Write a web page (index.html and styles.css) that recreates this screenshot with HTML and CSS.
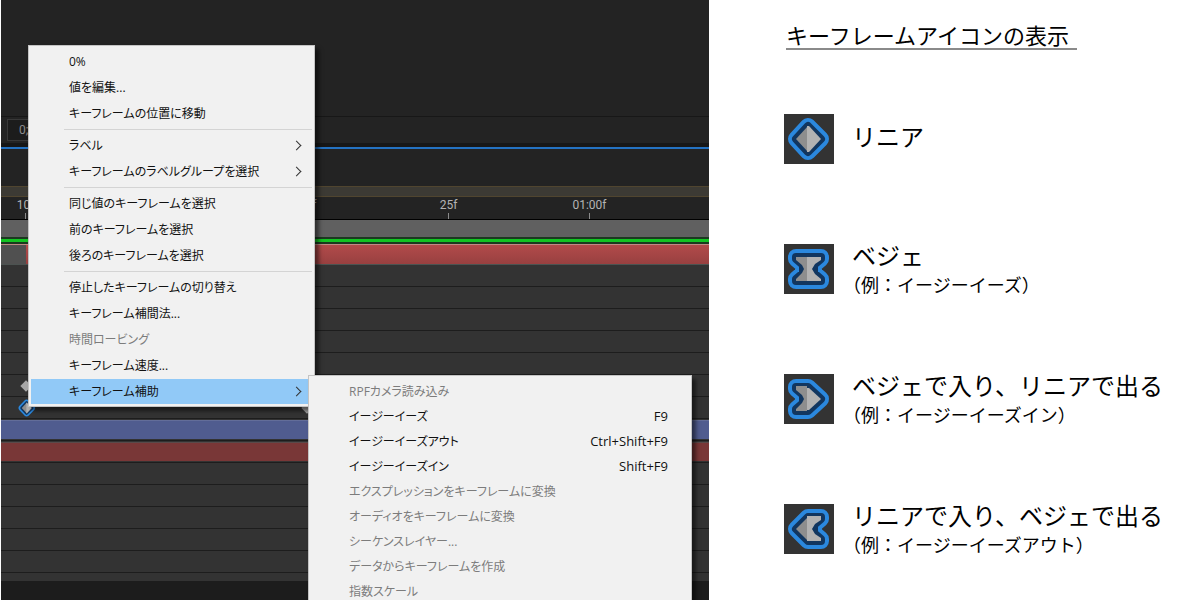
FILE: index.html
```html
<!DOCTYPE html>
<html lang="ja">
<head>
    <meta charset="UTF-8">
    <meta name="viewport" content="width=device-width, initial-scale=1.0">
    <title>キーフレームアイコンの表示</title>
    <link rel="stylesheet" href="styles.css">
</head>
<body>
    <svg class="defs" aria-hidden="true">
        <symbol id="linear" viewBox="0 0 50 50">
            <path class="ring" d="M24 12L37 25L24 38L12 25Z"/>
            <path class="gap" d="M24 12L37 25L24 38L12 25Z"/>
            <path class="dark" d="M24 12V38L12 25Z"/>
            <path class="light" d="M23 12L25 12L37 25L25 38H23Z"/>
        </symbol>
        <symbol id="bezier" viewBox="0 0 50 50">
            <path class="ring" d="M12 13H37V15L30 21V29L37 35V37H12V35L19 29V21L12 15Z"/>
            <path class="gap" d="M12 13H37V15L30 21V29L37 35V37H12V35L19 29V21L12 15Z"/>
            <path class="dark" d="M12 13H23V37H12V35L18 29L20 25L18 21L12 16Z"/>
            <path class="light" d="M23 13H37V16L31 20L28 25L31 30L37 35V37H23Z"/>
        </symbol>
        <symbol id="bezier-linear" viewBox="0 0 50 50">
            <path class="ring" d="M12 13H24L37 25L24 37H12V35L19 29V21L12 15Z"/>
            <path class="gap" d="M12 13H24L37 25L24 37H12V35L19 29V21L12 15Z"/>
            <path class="dark" d="M12 12H23V37H12V35L18 29L20 25L18 21L12 16Z"/>
            <path class="light" d="M23 14H25L37 25L25 36H23Z"/>
        </symbol>
        <symbol id="linear-bezier" viewBox="0 0 50 50">
            <path class="ring" d="M24 13H37V15L30 21V29L37 35V37H24L12 25Z"/>
            <path class="gap" d="M24 13H37V15L30 21V29L37 35V37H24L12 25Z"/>
            <path class="dark" d="M23 14V36L12 25Z"/>
            <path class="light" d="M23 12H37V16L31 20L28 25L31 30L37 34V37H23Z"/>
        </symbol>
    </svg>

    <section class="timeline">
        <div class="panel-top"></div>
        <div class="toolbar"><span class="field">0;</span></div>
        <div class="active-line"></div>
        <div class="navigator"></div>
        <div class="work-range"></div>
        <div class="ruler">
            <span class="tick">10f</span>
            <span class="tick"></span>
            <span class="tick">20f</span>
            <span class="tick">25f</span>
            <span class="tick">01:00f</span>
        </div>
        <div class="work-area"></div>
        <div class="cache"></div>
        <div class="layer selected"></div>
        <div class="row"></div>
        <div class="row"></div>
        <div class="row"></div>
        <div class="row"></div>
        <div class="row"></div>
        <div class="row"><i class="key"></i></div>
        <div class="row">
            <svg class="key-selected"><use href="#linear"/></svg>
            <i class="key end"></i>
        </div>
        <div class="row"><div class="bar blue"></div></div>
        <div class="row"><div class="bar red"></div></div>
        <div class="row"></div>
        <div class="row"></div>
        <div class="row"></div>
        <div class="row"></div>
        <div class="row"></div>
        <div class="row last"></div>

        <div class="menu main-menu">
            <button>0%</button>
            <button>値を編集...</button>
            <button>キーフレームの位置に移動</button>
            <hr>
            <button class="more">ラベル</button>
            <button class="more">キーフレームのラベルグループを選択</button>
            <hr>
            <button>同じ値のキーフレームを選択</button>
            <button>前のキーフレームを選択</button>
            <button>後ろのキーフレームを選択</button>
            <hr>
            <button>停止したキーフレームの切り替え</button>
            <button>キーフレーム補間法...</button>
            <button disabled>時間ロービング</button>
            <button>キーフレーム速度...</button>
            <button class="more active">キーフレーム補助</button>
        </div>

        <div class="menu sub-menu">
            <button disabled>RPFカメラ読み込み</button>
            <button>イージーイーズ<span>F9</span></button>
            <button>イージーイーズアウト<span>Ctrl+Shift+F9</span></button>
            <button>イージーイーズイン<span>Shift+F9</span></button>
            <button disabled>エクスプレッションをキーフレームに変換</button>
            <button disabled>オーディオをキーフレームに変換</button>
            <button disabled>シーケンスレイヤー...</button>
            <button disabled>データからキーフレームを作成</button>
            <button disabled>指数スケール</button>
        </div>
    </section>

    <section class="legend">
        <h1>キーフレームアイコンの表示</h1>
        <ul>
            <li>
                <svg class="icon"><use href="#linear"/></svg>
                <h2 class="single">リニア</h2>
            </li>
            <li>
                <svg class="icon"><use href="#bezier"/></svg>
                <div>
                    <h2>ベジェ</h2>
                    <p>（例：イージーイーズ）</p>
                </div>
            </li>
            <li>
                <svg class="icon"><use href="#bezier-linear"/></svg>
                <div>
                    <h2>ベジェで入り、リニアで出る</h2>
                    <p>（例：イージーイーズイン）</p>
                </div>
            </li>
            <li>
                <svg class="icon"><use href="#linear-bezier"/></svg>
                <div>
                    <h2>リニアで入り、ベジェで出る</h2>
                    <p>（例：イージーイーズアウト）</p>
                </div>
            </li>
        </ul>
    </section>
</body>
</html>
```

FILE: styles.css
```css
* {
    box-sizing: border-box;
}

body {
    margin: 0;
    display: flex;
    height: 100vh;
    overflow: hidden;
    background-color: #fff;
    color: #000;
    font-family: "Noto Sans CJK JP", sans-serif;
}

.defs {
    position: absolute;
    width: 0;
    height: 0;
}

/* icon parts */
.ring {
    fill: #2b88de;
    stroke: #2b88de;
    stroke-width: 16;
    stroke-linejoin: round;
}

.gap {
    fill: #12365f;
    stroke: #12365f;
    stroke-width: 8;
    stroke-linejoin: round;
}

.dark {
    fill: #8e8e8e;
}

.light {
    fill: #b2b2b2;
}

/* timeline */
.timeline {
    position: relative;
    width: 59%;
    margin-left: 1px;
    overflow: hidden;
    background-color: #1c1c1c;
}

.panel-top {
    height: 117px;
    background-color: #232323;
    border-bottom: 1px solid #171717;
}

.toolbar {
    height: 26px;
    padding: 2px 6px;
    background-color: #232323;
}

.field {
    display: block;
    width: 80px;
    height: 22px;
    padding-left: 11px;
    border: 1px solid #383838;
    background-color: #1c1c1c;
    color: #8c8c8c;
    font: 12px/20px Roboto, sans-serif;
}

.active-line {
    height: 6px;
    background-color: #171717;
    border-bottom: 2px solid #2472c2;
}

.navigator {
    height: 37px;
    background-color: #232323;
}

.work-range {
    height: 11px;
    background-color: #3c3a34;
    border: solid #50452f;
    border-width: 1px 0;
}

.ruler {
    display: flex;
    height: 23px;
    margin-left: -46px;
    background-color: #232323;
    border-bottom: 1px solid #000;
}

.tick {
    display: flex;
    flex-direction: column;
    align-items: center;
    justify-content: flex-end;
    flex: none;
    width: 141px;
    color: #b4b4b4;
    font: 12px/16px Roboto, sans-serif;
}

.tick::after {
    content: "";
    width: 1px;
    height: 6px;
    background-color: #8a8a8a;
}

.work-area {
    height: 17px;
    background-color: #606060;
}

.cache {
    height: 7px;
    background-color: #12c422;
    border: solid #1b3a1f;
    border-width: 2px 0;
}

.layer {
    height: 21px;
    border: solid #4c5351;
    border-width: 1px 0;
    background-color: #505050;
}

.selected {
    background-image: linear-gradient(#b24b4b, #984040);
    background-position: 25px 0;
    background-repeat: no-repeat;
    border-top-color: #c08a86;
}

.row {
    display: flex;
    align-items: center;
    height: 22px;
    background-color: #333;
    border-bottom: 1px solid #1d1d1d;
}

.last {
    height: 8px;
    border: 0;
}

.key {
    width: 8px;
    height: 8px;
    margin-left: 21px;
    background-color: #a8a8a8;
    transform: rotate(45deg);
}

.key-selected {
    width: 20px;
    height: 20px;
    margin-left: 16px;
}

.key.end {
    margin-left: 266px;
}

.bar {
    flex: 1;
    height: 19px;
}

.blue {
    background-color: #505c8f;
    border-top: 1px solid #636d99;
}

.red {
    background-color: #793737;
    border-top: 1px solid #5a4a4a;
}

/* context menus */
.menu {
    position: absolute;
    display: flex;
    flex-direction: column;
    background-color: #f1f1f1;
    border: 1px solid #c4c4c4;
    box-shadow: 4px 4px 4px rgba(0, 0, 0, 0.5);
}

.main-menu {
    top: 45px;
    left: 27px;
    width: 287px;
    padding: 3px 2px 2px;
    gap: 1px;
}

.sub-menu {
    top: 375px;
    left: 307px;
    width: 384px;
    padding: 3px 2px;
}

.menu button {
    display: flex;
    align-items: center;
    height: 25px;
    flex: none;
    padding: 0 21px 0 38px;
    border: 0;
    background: none;
    color: #111;
    font: 12px/25px "Open Sans", "Noto Sans CJK JP", sans-serif;
    font-feature-settings: "palt";
    white-space: nowrap;
}

.menu button:disabled {
    color: #7c7c7c;
}

.menu button.active {
    background-color: #91c9f7;
}

.menu button span {
    margin-left: auto;
    font-size: 13px;
}

.more::after {
    content: "";
    width: 6px;
    height: 6px;
    margin-left: auto;
    margin-right: -9px;
    border: solid #333;
    border-width: 1px 1px 0 0;
    transform: rotate(45deg);
}

.menu hr {
    width: calc(100% - 33px);
    height: 5px;
    margin: 0 0 0 33px;
    border: 0;
    background: linear-gradient(#d4d4d4, #d4d4d4) 0 2px / 100% 1px no-repeat;
}

/* legend */
.legend {
    flex: 1;
    padding: 20px 0 0 75px;
}

.legend h1 {
    display: inline-block;
    margin: 0 2px;
    padding-right: 8px;
    border-bottom: 2px solid #8a8a8a;
    font-size: 22px;
    font-weight: 400;
    line-height: 28px;
}

.legend ul {
    display: flex;
    flex-direction: column;
    gap: 76px;
    margin: 64px 0 0;
    padding: 0;
    list-style: none;
}

.legend li {
    display: flex;
    gap: 18px;
    min-height: 54px;
    white-space: nowrap;
}

.icon {
    flex: none;
    width: 50px;
    height: 50px;
    background-color: #333;
}

.legend h2 {
    margin: 0;
    font-size: 24px;
    font-weight: 400;
    line-height: 22px;
}

.legend h2.single {
    line-height: 44px;
}

.legend p {
    margin: 6px 0 0;
    font-size: 18px;
    line-height: 24px;
    text-spacing-trim: trim-start;
}
```
